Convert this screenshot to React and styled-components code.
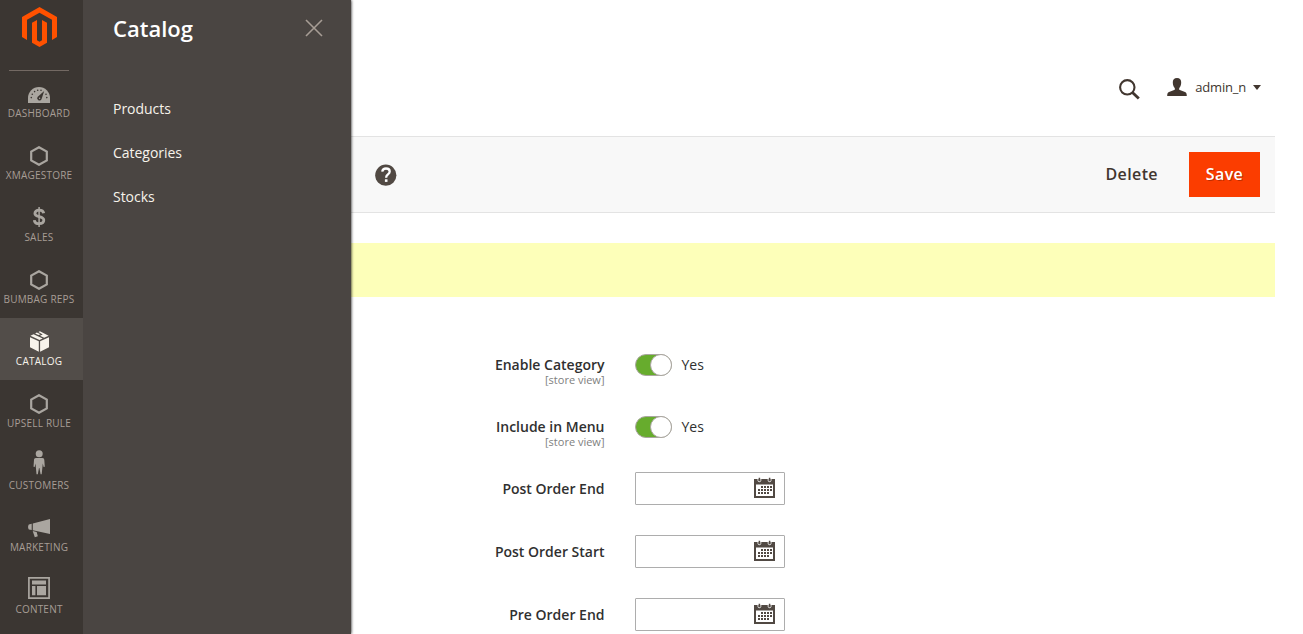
import React from 'react';
import styled, { createGlobalStyle, css } from 'styled-components';

const Global = createGlobalStyle`
  *, *::before, *::after { box-sizing: border-box; }
  body { margin: 0; overflow: hidden; background: #fff; color: #41362f; font-family: "Open Sans", "Liberation Sans", sans-serif; font-size: 14px; }
  button { font-family: inherit; border: 0; background: none; padding: 0; cursor: pointer; }
  svg { display: block; }
`;
const Shell = styled.div`display: flex; height: 634px; overflow: hidden;`;

const Sidebar = styled.nav`
  flex: 0 0 83px; background: #3b3632; overflow: hidden;
`;
const Brand = styled.a`
  display: flex; justify-content: center; height: 70px; padding: 7px 4px 0 0;
`;
const NavItem = styled.a`
  position: relative;
  display: flex; flex-direction: column; align-items: center;
  height: 62px; padding: 10px 5px 0 0;
  font-size: 10px; line-height: 14px; letter-spacing: 0.22px; text-transform: uppercase; white-space: nowrap;
  color: ${p => (p.$active ? '#f7f3eb' : '#a79d95')};
  background: ${p => (p.$active ? '#524d49' : 'transparent')};
  ${p => p.$first && css`
    &::before { content: ''; position: absolute; top: 0; left: 9px; width: 60px; height: 1px; background: #736963; }
  `}
`;
const NavIcon = styled.span`
  display: flex; align-items: flex-start; justify-content: center; height: 26px;
  color: ${p => (p.$active ? '#f7f3eb' : '#aaa6a0')};
  svg { margin-top: ${p => p.$top}px; flex: none; }
`;
const NavLabel = styled.span`display: block;`;

const Flyout = styled.aside`
  position: relative; z-index: 1; flex: 0 0 268px; padding: 0 29px 0 30px;
  background: #4a4542; box-shadow: 0 0 3px #000; clip-path: inset(0 -10px 0 0);
  color: #fff;
`;
const FlyoutHead = styled.div`display: flex; justify-content: space-between; height: 87px; padding-top: 13px;`;
const FlyoutTitle = styled.h2`margin: 0; font-size: 22px; line-height: 30px; font-weight: 600;`;
const CloseButton = styled.button`height: 18px; margin: 5.5px -0.5px 0 0; color: #a79d95;`;
const FlyoutLink = styled.a`display: block; height: 44px; padding-top: 12px; font-size: 14px; line-height: 20px; letter-spacing: -0.03px; color: #f7f3eb;`;

const Main = styled.main`flex: 1; min-width: 0; padding-right: 28px;`;
const Header = styled.header`
  display: flex; align-items: flex-start; justify-content: flex-end; height: 136px; padding: 77px 14px 0 0;
`;
const SearchButton = styled.button`margin: 2px 27px 0 0; color: #41362f;`;
const Account = styled.button`
  display: flex; align-items: center; height: 20px; font-size: 13px; line-height: 20px; letter-spacing: -0.2px; color: #41362f;
  svg:last-child { margin-left: 7px; }
`;
const AccountName = styled.span`margin-left: 8.5px;`;
const Actions = styled.div`
  display: flex; align-items: center; height: 77px; padding: 0 15px 0 24px;
  background: #f8f8f8; border: solid #e3e3e3; border-width: 1px 0;
`;
const Help = styled.span`margin: 1px auto 0 0; color: #514943;`;
const ActionButton = styled.button`
  height: 45px; padding: 0 16px 2px; font-size: 16px; line-height: 22px; font-weight: 600; letter-spacing: 0.4px; color: #41362f;
  ${p => p.$primary && css`
    width: 71px; margin-left: 15px; color: #fff; background: #fb3d00; text-shadow: 1px 1px 0 rgba(0, 0, 0, .25);
  `}
`;
const Notice = styled.div`height: 54px; margin-top: 30px; background: #fdffb9;`;
const Form = styled.form`padding-top: 51px;`;
const Field = styled.div`
  display: grid; grid-template-columns: 253.5px 1fr; column-gap: 30.5px; align-items: start;
  height: ${p => (p.$tall ? 62 : 63)}px;
  padding-top: ${p => (p.$tall ? 6 : 0)}px;
`;
const FieldLabel = styled.label`
  padding-top: ${p => (p.$offset || 0)}px;
  text-align: right; font-size: 14px; line-height: 20px; font-weight: 600; color: #303030;
`;
const Scope = styled.span`display: block; margin-top: -1px; font-size: 11px; line-height: 12px; font-weight: 400; color: #808080;`;
const SwitchRow = styled.div`display: flex; align-items: center; height: 22px; line-height: 20px; color: #303030;`;
const Track = styled.span`
  display: flex; justify-content: flex-end; width: 37px; height: 22px; margin-right: 9.5px;
  border: 1px solid #aaa6a0; border-radius: 11px; background: #67ac2d;
`;
const Knob = styled.span`width: 22px; height: 22px; margin: -1px; border: 1px solid #aaa6a0; border-radius: 50%; background: #fff;`;
const DateBox = styled.div`
  display: flex; align-items: flex-start; justify-content: flex-end; width: 150px; height: 33px; padding: 4px 9px 0 0;
  border: 1px solid #adadad; border-radius: 1px; background: #fff; color: #514943;
`;

const MagentoLogo = () => (
  <svg width="35" height="40" viewBox="0.5 0 35 40" fill="#ff5100">
    <path d="M18 0 35.5 10v20l-5 2.9V12.8L18 5.7 5.5 12.8v20.1L.5 30V10z" />
    <path d="M10.5 15.8 15.5 13v20.3L18 34.8l2.5-1.5V13l5 2.8v20L18 40l-7.5-4.2z" />
  </svg>
);
const Gauge = () => (
  <svg width="22" height="16" viewBox="0 0 22 16">
    <path fill="currentColor" d="M0 16V11a11 11 0 0 1 22 0v5z" />
    <g fill="#3b3632">
      <circle cx="3.3" cy="10.6" r=".8" /><circle cx="4.3" cy="7.2" r=".8" /><circle cx="6.6" cy="4.6" r=".8" />
      <circle cx="9.7" cy="3.2" r=".8" /><circle cx="13" cy="3.3" r=".8" />
      <circle cx="18" cy="7.3" r=".8" /><circle cx="18.8" cy="10.6" r=".8" />
      <path d="m16.2 4-2.7 8.3a2.2 2.2 0 1 1-4-2.3z" />
    </g>
    <circle cx="11.6" cy="11.3" r=".7" fill="currentColor" />
  </svg>
);
const Hexagon = () => (
  <svg width="18" height="20" viewBox="0 0 18 20" fill="none" stroke="currentColor" strokeWidth="2.2">
    <path d="m9 1.2 7.8 4.4v8.8L9 18.8l-7.8-4.400V5.600z" />
  </svg>
);
const Dollar = () => (
  <svg width="13" height="20" viewBox="0 0 13 20" fill="none" stroke="currentColor">
    <path strokeWidth="2.8" d="M10.7 6.3C10.4 4.300 8.900 3.200 6.100 3.200S1.900 4.400 1.900 6.400c0 4.300 8.900 2 8.900 6.700 0 2.300-1.700 3.600-4.600 3.600-2.900 0-4.600-1.200-4.900-3.500" />
    <path strokeWidth="1.5" d="M6.1 0v20" />
  </svg>
);
const Box = () => (
  <svg width="19" height="21" viewBox="0 0 19 21" fill="currentColor">
    <path d="M0 6.3 8.8 10.2v10.6L0 16.3zM10.1 10.2 19 6.3v10l-8.900 4.500z" />
    <path d="M.4 4.800 3.600 3.200 12.700 7.600 9.500 9.100zM5.100 2.500 6.900 1.600 10.500 3.300 8.400 4.100zM9.900.2 18.600 4.700 14.100 6.800 10 4.800 12.700 3.500 8.400 1.100z" />
  </svg>
);
const Person = () => (
  <svg width="12" height="25" viewBox="0 0 12 25" fill="currentColor">
    <circle cx="6.2" cy="3.7" r="3.5" />
    <path d="M2.9 8h6.5c1.300 0 1.800.7 1.900 2l.5 6.700-1.200.2-.8-3.300-1.100 10.700H7.600L6.400 18H6l-1.200 6.300H3.500l-1-10.700-.8 3.300-1.200-.2.5-6.700c.1-1.300.6-2 1.900-2z" />
  </svg>
);
const Megaphone = () => (
  <svg width="22" height="19" viewBox="0 0 22 19" fill="currentColor">
    <path d="M22 0v15L4.800 11.200V4.500zM.8 5.400l2.900-.7v6.400l-2.900-.7C-.2 8.900-.2 7 .8 5.400zM4.700 12l4 1 1.100 4.300-3 .9z" />
  </svg>
);
const Layout = () => (
  <svg width="22" height="22" viewBox="0 0 22 22">
    <path fill="none" stroke="currentColor" strokeWidth="1.7" d="M.9.9h20.200v20.200H.9z" />
    <path fill="currentColor" d="M4 3.500h14v4H4zM4 9h3.400v9.300H4zM9 9h9v9.300H9z" />
  </svg>
);
const Calendar = () => (
  <svg width="21" height="21" viewBox="0 0 21 21">
    <path fill="currentColor" fillRule="evenodd" d="M0 2h21v19H0zM2 7.500v11.500h17V7.500z" />
    <g fill="none">
      <path stroke="#fff" strokeWidth=".9" d="M4 1.800v1.700q0 1.200 1.400 1.200t1.400-1.200V1.800M14.200 1.800v1.700q0 1.200 1.400 1.200t1.400-1.200V1.800" />
      <path stroke="currentColor" strokeWidth="1.500" d="M5.400.8v3M15.600.8v3" />
      <path stroke="currentColor" strokeWidth="2" strokeDasharray="2 1" d="M7 10h11M4 13h14M4 16h11" />
    </g>
  </svg>
);

const navItems = [
  ['Dashboard', Gauge, 7], ['Xmagestore', Hexagon, 3.5], ['Sales', Dollar, 3], ['Bumbag Reps', Hexagon, 3.5], ['Catalog', Box, 3],
  ['Upsell Rule', Hexagon, 3.5], ['Customers', Person, -2], ['Marketing', Megaphone, 5], ['Content', Layout, 1],
];

export default function App() {
  return (
    <>
      <Global />
      <Shell>
        <Sidebar>
          <Brand><MagentoLogo /></Brand>
          {navItems.map(([name, Icon, top], i) => (
            <NavItem key={name} $first={i === 0} $active={name === 'Catalog'}>
              <NavIcon $active={name === 'Catalog'} $top={top}><Icon /></NavIcon>
              <NavLabel>{name}</NavLabel>
            </NavItem>
          ))}
        </Sidebar>
        <Flyout>
          <FlyoutHead>
            <FlyoutTitle>Catalog</FlyoutTitle>
            <CloseButton type="button" aria-label="Close">
              <svg width="18" height="18" viewBox="0 0 18 18" fill="none" stroke="currentColor" strokeWidth="1.6"><path d="m1 1 16 16M17 1 1 17" /></svg>
            </CloseButton>
          </FlyoutHead>
          {['Products', 'Categories', 'Stocks'].map(t => <FlyoutLink key={t}>{t}</FlyoutLink>)}
        </Flyout>
        <Main>
          <Header>
            <SearchButton type="button" aria-label="Search">
              <svg width="21" height="21" viewBox="0 0 21 21" fill="none" stroke="currentColor"><circle cx="8.3" cy="8.3" r="7.2" strokeWidth="2.1" /><path strokeWidth="2.8" d="m13.2 13.2 6.6 6.4" /></svg>
            </SearchButton>
            <Account type="button">
              <svg width="20" height="18" viewBox="0 0 20 18" fill="currentColor"><path d="M10 0c2.8 0 4.4 1.7 4.2 4.7-.1 2.6-1 4.4-2 5.4v1.7l5.8 2.3c1.3.5 1.8 1.7 1.8 3.9H.2c0-2.2.5-3.4 1.8-3.9l5.8-2.3v-1.7c-1-1-1.9-2.8-2-5.4C5.6 1.7 7.2 0 10 0z" /></svg>
              <AccountName>admin_n</AccountName>
              <svg width="8" height="5" viewBox="0 0 8 5" fill="currentColor"><path d="M0 0h8L4 5z" /></svg>
            </Account>
          </Header>
          <Actions>
            <Help>
              <svg width="22" height="22" viewBox="0 0 22 22"><circle cx="10.8" cy="11.2" r="10.6" fill="currentColor" /><path fill="none" stroke="#fff" strokeWidth="2.3" d="M7.2 7.6C7.6 5.5 9 4.5 11 4.500c2.200 0 3.700 1.100 3.700 3 0 2.800-3.500 2.800-3.500 5.700v.5" /><path fill="#fff" d="M9.9 15.3h2.600v2.600H9.900z" /></svg>
            </Help>
            <ActionButton type="button">Delete</ActionButton>
            <ActionButton type="button" $primary>Save</ActionButton>
          </Actions>
          <Notice />
          <Form>
            {['Enable Category', 'Include in Menu'].map(t => (
              <Field key={t} $tall>
                <FieldLabel $offset={1}>{t}<Scope>[store view]</Scope></FieldLabel>
                <SwitchRow><Track><Knob /></Track>Yes</SwitchRow>
              </Field>
            ))}
            {['Post Order End', 'Post Order Start', 'Pre Order End'].map(t => (
              <Field key={t}>
                <FieldLabel $offset={7}>{t}</FieldLabel>
                <DateBox><Calendar /></DateBox>
              </Field>
            ))}
          </Form>
        </Main>
      </Shell>
    </>
  );
}
